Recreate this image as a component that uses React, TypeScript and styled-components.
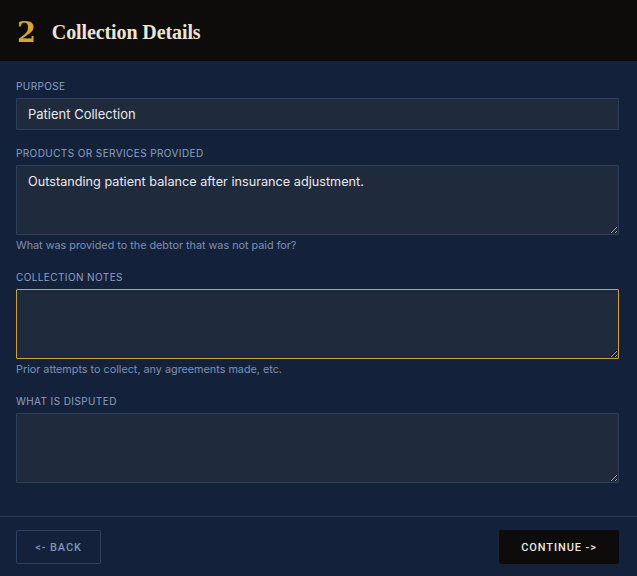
import * as React from "react";
import styled, { createGlobalStyle } from "styled-components";

const GlobalStyle = createGlobalStyle`
  html, body {
    margin: 0;
    padding: 0;
    background: #13223a;
  }
  * {
    box-sizing: border-box;
  }
`;

interface FieldDef {
  label: string;
  value?: string;
  hint?: string;
  multiline?: boolean;
  active?: boolean;
}

const fields: FieldDef[] = [
  { label: "Purpose", value: "Patient Collection" },
  {
    label: "Products or Services Provided",
    value: "Outstanding patient balance after insurance adjustment.",
    hint: "What was provided to the debtor that was not paid for?",
    multiline: true,
  },
  {
    label: "Collection Notes",
    hint: "Prior attempts to collect, any agreements made, etc.",
    multiline: true,
    active: true,
  },
  { label: "What Is Disputed", multiline: true },
];

const App: React.FC = () => {
  return (
    <Page>
      <GlobalStyle />
      <Header>
        <StepNumber>2</StepNumber>
        <Title>Collection Details</Title>
      </Header>

      <Form>
        {fields.map((f) => (
          <Field key={f.label}>
            <Label>{f.label}</Label>
            {f.multiline ? (
              <TextArea defaultValue={f.value} $active={f.active} />
            ) : (
              <Input defaultValue={f.value} />
            )}
            {f.hint && <Hint>{f.hint}</Hint>}
          </Field>
        ))}
      </Form>

      <Footer>
        <BackButton>&lt;- Back</BackButton>
        <ContinueButton>Continue -&gt;</ContinueButton>
      </Footer>
    </Page>
  );
};

export default App;

const Page = styled.div`
  width: 637px;
  min-height: 576px;
  background: #13223a;
  font-family: "Inter", "Noto Sans", sans-serif;
`;

const Header = styled.div`
  height: 61px;
  background: #0e0c0a;
  display: flex;
  align-items: center;
  padding: 3px 16px 0 17px;
  gap: 16px;
`;

const StepNumber = styled.span`
  font-family: "DejaVu Serif", "Liberation Serif", serif;
  font-weight: 700;
  font-size: 27px;
  color: #d4a63c;
  line-height: 1;
`;

const Title = styled.h1`
  margin: 0;
  font-family: "Liberation Serif", "DejaVu Serif", serif;
  font-weight: 700;
  font-size: 20px;
  color: #ece5d6;
  letter-spacing: -0.1px;
`;

const Form = styled.div`
  display: flex;
  flex-direction: column;
  gap: 16px;
  padding: 18px 18px 33px 16px;
  border-bottom: 1px solid #2a3b5c;
`;

const Field = styled.div`
  display: flex;
  flex-direction: column;
`;

const Label = styled.label`
  font-size: 10px;
  line-height: 14px;
  text-transform: uppercase;
  letter-spacing: 0.4px;
  color: #8fa0c2;
  margin-bottom: 5px;
`;

const Input = styled.input`
  height: 32px;
  width: 100%;
  background: #1f2a3c;
  border: 1px solid #2c3d5e;
  border-radius: 1px;
  padding: 0 11px;
  color: #e6e9ef;
  font-family: "Inter", "Noto Sans", sans-serif;
  font-size: 13px;
  outline: none;
`;

const TextArea = styled.textarea<{ $active?: boolean }>`
  height: 70px;
  width: 100%;
  resize: vertical;
  background: #1f2a3c;
  border: 1px solid ${(p) => (p.$active ? "#d2a22c" : "#2c3d5e")};
  border-radius: 1px;
  padding: 8px 11px;
  color: #e6e9ef;
  font-family: "Inter", "Noto Sans", sans-serif;
  font-size: 12.7px;
  line-height: 1.3;
  outline: none;
  display: block;
`;

const Hint = styled.div`
  margin-top: 4px;
  margin-bottom: 1px;
  font-size: 10.8px;
  line-height: 14px;
  color: #7f90b3;
`;

const Footer = styled.div`
  display: flex;
  justify-content: space-between;
  align-items: center;
  padding: 13px 18px 12px 16px;
`;

const ButtonBase = styled.button`
  height: 34px;
  font-family: "Roboto", "Liberation Sans", sans-serif;
  font-size: 11px;
  font-weight: 500;
  letter-spacing: 0.9px;
  text-transform: uppercase;
  border-radius: 2px;
  cursor: pointer;
`;

const BackButton = styled(ButtonBase)`
  width: 85px;
  background: transparent;
  border: 1px solid #2f4165;
  color: #8194ba;
`;

const ContinueButton = styled(ButtonBase)`
  width: 120px;
  background: #0e0c0a;
  border: none;
  color: #ebe7df;
`;
